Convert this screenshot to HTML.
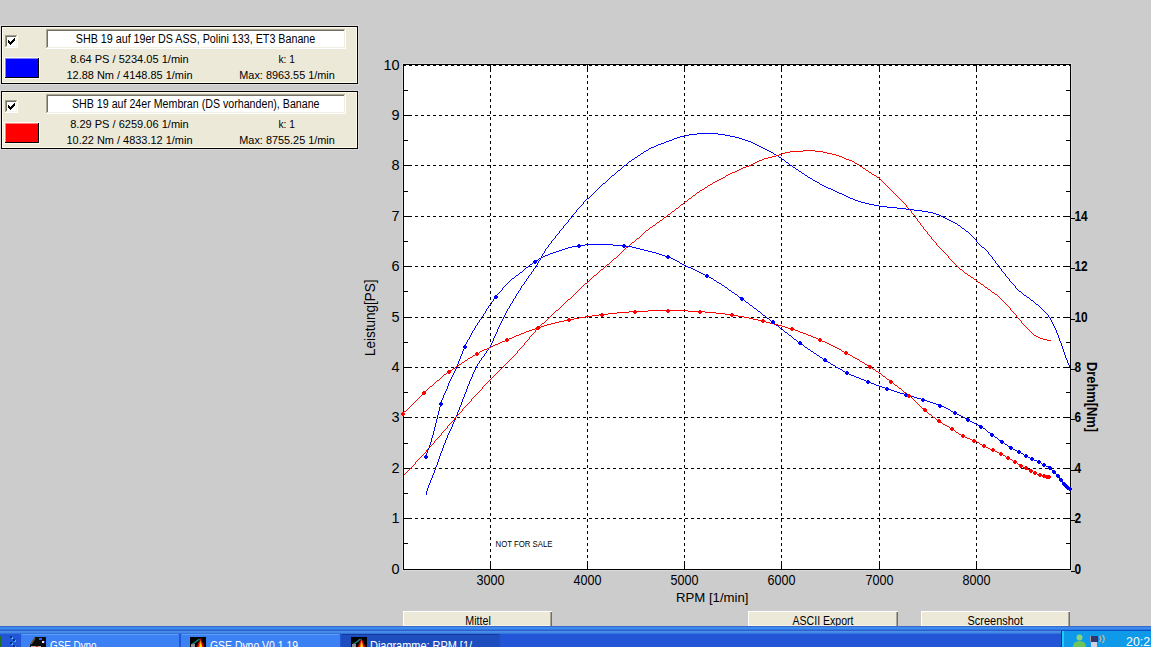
<!DOCTYPE html>
<html><head><meta charset="utf-8"><title>Diagramme</title><style>
html,body{margin:0;padding:0;width:1151px;height:647px;overflow:hidden;background:#cccccc}
svg{position:absolute;left:0;top:0;display:block}
text{font-family:"Liberation Sans",sans-serif;fill:#000}
g[fill="#ffffff"] text{fill:#fff}
</style></head><body>
<svg width="1151" height="647" viewBox="0 0 1151 647">
<g shape-rendering="crispEdges">
<rect x="0" y="25" width="359" height="60" fill="#dcdcdc"/><rect x="1" y="26" width="357" height="58" fill="#000"/><rect x="2" y="27" width="355" height="56" fill="#fffbea"/><rect x="3" y="28" width="353" height="54" fill="#ece9d8"/><rect x="5" y="35" width="13" height="13" fill="#ffffff"/><rect x="5" y="35" width="12" height="12" fill="#a29e90"/><rect x="6" y="36" width="11" height="11" fill="#f5f3ea"/><rect x="6" y="36" width="10" height="10" fill="#716f64"/><rect x="7" y="37" width="9" height="9" fill="#ffffff"/><rect x="14" y="38" width="1" height="1" fill="#000"/><rect x="13" y="39" width="1" height="1" fill="#000"/><rect x="14" y="39" width="1" height="1" fill="#000"/><rect x="8" y="40" width="1" height="1" fill="#000"/><rect x="12" y="40" width="1" height="1" fill="#000"/><rect x="13" y="40" width="1" height="1" fill="#000"/><rect x="14" y="40" width="1" height="1" fill="#000"/><rect x="8" y="41" width="1" height="1" fill="#000"/><rect x="9" y="41" width="1" height="1" fill="#000"/><rect x="11" y="41" width="1" height="1" fill="#000"/><rect x="12" y="41" width="1" height="1" fill="#000"/><rect x="13" y="41" width="1" height="1" fill="#000"/><rect x="8" y="42" width="1" height="1" fill="#000"/><rect x="9" y="42" width="1" height="1" fill="#000"/><rect x="10" y="42" width="1" height="1" fill="#000"/><rect x="11" y="42" width="1" height="1" fill="#000"/><rect x="12" y="42" width="1" height="1" fill="#000"/><rect x="9" y="43" width="1" height="1" fill="#000"/><rect x="10" y="43" width="1" height="1" fill="#000"/><rect x="11" y="43" width="1" height="1" fill="#000"/><rect x="10" y="44" width="1" height="1" fill="#000"/><rect x="46" y="29" width="300" height="20" fill="#ffffff"/><rect x="46" y="29" width="299" height="19" fill="#aca899"/><rect x="47" y="30" width="298" height="18" fill="#f1efe2"/><rect x="47" y="30" width="297" height="17" fill="#716f64"/><rect x="48" y="31" width="296" height="16" fill="#ffffff"/><text x="75.8" y="43" font-size="12" text-anchor="start" font-weight="normal" textLength="239.5" lengthAdjust="spacingAndGlyphs">SHB 19 auf 19er DS ASS, Polini 133, ET3 Banane</text><rect x="5" y="58" width="34" height="20" fill="#000"/><rect x="4" y="57" width="36" height="22" fill="#fffbea"/><rect x="5" y="58" width="34" height="20" fill="#000"/><rect x="5" y="58" width="33" height="19" fill="#8080ff"/><rect x="6" y="59" width="32" height="18" fill="#0000ff"/><text x="70.2" y="63" font-size="11.5" text-anchor="start" font-weight="normal" textLength="118.5" lengthAdjust="spacingAndGlyphs">8.64 PS / 5234.05 1/min</text><text x="66.5" y="79" font-size="11.5" text-anchor="start" font-weight="normal" textLength="126" lengthAdjust="spacingAndGlyphs">12.88 Nm / 4148.85 1/min</text><text x="278.5" y="63" font-size="11.5" text-anchor="start" font-weight="normal" textLength="16.5" lengthAdjust="spacingAndGlyphs">k: 1</text><text x="239.3" y="79" font-size="11.5" text-anchor="start" font-weight="normal" textLength="95.5" lengthAdjust="spacingAndGlyphs">Max: 8963.55 1/min</text>
<rect x="0" y="90" width="359" height="60" fill="#dcdcdc"/><rect x="1" y="91" width="357" height="58" fill="#000"/><rect x="2" y="92" width="355" height="56" fill="#fffbea"/><rect x="3" y="93" width="353" height="54" fill="#ece9d8"/><rect x="5" y="100" width="13" height="13" fill="#ffffff"/><rect x="5" y="100" width="12" height="12" fill="#a29e90"/><rect x="6" y="101" width="11" height="11" fill="#f5f3ea"/><rect x="6" y="101" width="10" height="10" fill="#716f64"/><rect x="7" y="102" width="9" height="9" fill="#ffffff"/><rect x="14" y="103" width="1" height="1" fill="#000"/><rect x="13" y="104" width="1" height="1" fill="#000"/><rect x="14" y="104" width="1" height="1" fill="#000"/><rect x="8" y="105" width="1" height="1" fill="#000"/><rect x="12" y="105" width="1" height="1" fill="#000"/><rect x="13" y="105" width="1" height="1" fill="#000"/><rect x="14" y="105" width="1" height="1" fill="#000"/><rect x="8" y="106" width="1" height="1" fill="#000"/><rect x="9" y="106" width="1" height="1" fill="#000"/><rect x="11" y="106" width="1" height="1" fill="#000"/><rect x="12" y="106" width="1" height="1" fill="#000"/><rect x="13" y="106" width="1" height="1" fill="#000"/><rect x="8" y="107" width="1" height="1" fill="#000"/><rect x="9" y="107" width="1" height="1" fill="#000"/><rect x="10" y="107" width="1" height="1" fill="#000"/><rect x="11" y="107" width="1" height="1" fill="#000"/><rect x="12" y="107" width="1" height="1" fill="#000"/><rect x="9" y="108" width="1" height="1" fill="#000"/><rect x="10" y="108" width="1" height="1" fill="#000"/><rect x="11" y="108" width="1" height="1" fill="#000"/><rect x="10" y="109" width="1" height="1" fill="#000"/><rect x="46" y="94" width="300" height="20" fill="#ffffff"/><rect x="46" y="94" width="299" height="19" fill="#aca899"/><rect x="47" y="95" width="298" height="18" fill="#f1efe2"/><rect x="47" y="95" width="297" height="17" fill="#716f64"/><rect x="48" y="96" width="296" height="16" fill="#ffffff"/><text x="72" y="108" font-size="12" text-anchor="start" font-weight="normal" textLength="247.5" lengthAdjust="spacingAndGlyphs">SHB 19 auf 24er Membran (DS vorhanden), Banane</text><rect x="5" y="123" width="34" height="20" fill="#000"/><rect x="4" y="122" width="36" height="22" fill="#fffbea"/><rect x="5" y="123" width="34" height="20" fill="#000"/><rect x="5" y="123" width="33" height="19" fill="#ff8080"/><rect x="6" y="124" width="32" height="18" fill="#ff0000"/><text x="70.2" y="128" font-size="11.5" text-anchor="start" font-weight="normal" textLength="118.5" lengthAdjust="spacingAndGlyphs">8.29 PS / 6259.06 1/min</text><text x="66.5" y="144" font-size="11.5" text-anchor="start" font-weight="normal" textLength="126" lengthAdjust="spacingAndGlyphs">10.22 Nm / 4833.12 1/min</text><text x="278.5" y="128" font-size="11.5" text-anchor="start" font-weight="normal" textLength="16.5" lengthAdjust="spacingAndGlyphs">k: 1</text><text x="239.3" y="144" font-size="11.5" text-anchor="start" font-weight="normal" textLength="95.5" lengthAdjust="spacingAndGlyphs">Max: 8755.25 1/min</text>
</g>
<g shape-rendering="crispEdges"><rect x="402" y="63" width="670" height="508" fill="#dadada"/><rect x="403" y="64" width="668" height="506" fill="#ffffff"/><g stroke="#000" stroke-width="1" stroke-dasharray="3 3"><line x1="403" y1="518.5" x2="1070" y2="518.5"/><line x1="403" y1="468.5" x2="1070" y2="468.5"/><line x1="403" y1="417.5" x2="1070" y2="417.5"/><line x1="403" y1="367.5" x2="1070" y2="367.5"/><line x1="403" y1="317.5" x2="1070" y2="317.5"/><line x1="403" y1="266.5" x2="1070" y2="266.5"/><line x1="403" y1="216.5" x2="1070" y2="216.5"/><line x1="403" y1="165.5" x2="1070" y2="165.5"/><line x1="403" y1="115.5" x2="1070" y2="115.5"/><line x1="403" y1="65.5" x2="1070" y2="65.5"/></g><g stroke="#000" stroke-width="1" stroke-dasharray="3 3" stroke-dashoffset="2"><line x1="490.5" y1="65" x2="490.5" y2="569"/><line x1="587.5" y1="65" x2="587.5" y2="569"/><line x1="684.5" y1="65" x2="684.5" y2="569"/><line x1="781.5" y1="65" x2="781.5" y2="569"/><line x1="879.5" y1="65" x2="879.5" y2="569"/><line x1="976.5" y1="65" x2="976.5" y2="569"/></g><g fill="#000" shape-rendering="crispEdges"><rect x="403" y="518" width="9" height="1"/><rect x="1063" y="518" width="8" height="1"/><rect x="403" y="468" width="9" height="1"/><rect x="1063" y="468" width="8" height="1"/><rect x="403" y="417" width="9" height="1"/><rect x="1063" y="417" width="8" height="1"/><rect x="403" y="367" width="9" height="1"/><rect x="1063" y="367" width="8" height="1"/><rect x="403" y="317" width="9" height="1"/><rect x="1063" y="317" width="8" height="1"/><rect x="403" y="266" width="9" height="1"/><rect x="1063" y="266" width="8" height="1"/><rect x="403" y="216" width="9" height="1"/><rect x="1063" y="216" width="8" height="1"/><rect x="403" y="165" width="9" height="1"/><rect x="1063" y="165" width="8" height="1"/><rect x="403" y="115" width="9" height="1"/><rect x="1063" y="115" width="8" height="1"/><rect x="403" y="543" width="5" height="1"/><rect x="1066" y="543" width="5" height="1"/><rect x="403" y="493" width="5" height="1"/><rect x="1066" y="493" width="5" height="1"/><rect x="403" y="443" width="5" height="1"/><rect x="1066" y="443" width="5" height="1"/><rect x="403" y="392" width="5" height="1"/><rect x="1066" y="392" width="5" height="1"/><rect x="403" y="342" width="5" height="1"/><rect x="1066" y="342" width="5" height="1"/><rect x="403" y="291" width="5" height="1"/><rect x="1066" y="291" width="5" height="1"/><rect x="403" y="241" width="5" height="1"/><rect x="1066" y="241" width="5" height="1"/><rect x="403" y="191" width="5" height="1"/><rect x="1066" y="191" width="5" height="1"/><rect x="403" y="140" width="5" height="1"/><rect x="1066" y="140" width="5" height="1"/><rect x="403" y="90" width="5" height="1"/><rect x="1066" y="90" width="5" height="1"/><rect x="490" y="64" width="1" height="8"/><rect x="490" y="561" width="1" height="9"/><rect x="587" y="64" width="1" height="8"/><rect x="587" y="561" width="1" height="9"/><rect x="684" y="64" width="1" height="8"/><rect x="684" y="561" width="1" height="9"/><rect x="781" y="64" width="1" height="8"/><rect x="781" y="561" width="1" height="9"/><rect x="879" y="64" width="1" height="8"/><rect x="879" y="561" width="1" height="9"/><rect x="976" y="64" width="1" height="8"/><rect x="976" y="561" width="1" height="9"/><rect x="403" y="64" width="668" height="1"/><rect x="403" y="569" width="668" height="1"/><rect x="403" y="64" width="1" height="506"/><rect x="1070" y="64" width="1" height="506"/><rect x="1071" y="571" width="4" height="1"/><rect x="1071" y="520" width="4" height="1"/><rect x="1071" y="470" width="4" height="1"/><rect x="1071" y="419" width="4" height="1"/><rect x="1071" y="369" width="4" height="1"/><rect x="1071" y="319" width="4" height="1"/><rect x="1071" y="268" width="4" height="1"/><rect x="1071" y="218" width="4" height="1"/></g></g>
<path d="M697 133h21v1h-21zM689 134h8v1h-8zM718 134h7v1h-7zM685 135h4v1h-4zM725 135h5v1h-5zM680 136h5v1h-5zM730 136h5v1h-5zM677 137h3v1h-3zM735 137h4v1h-4zM674 138h3v1h-3zM739 138h3v1h-3zM672 139h2v1h-2zM742 139h3v1h-3zM669 140h3v1h-3zM745 140h3v1h-3zM666 141h3v1h-3zM748 141h3v1h-3zM664 142h2v1h-2zM751 142h2v1h-2zM661 143h3v1h-3zM753 143h2v1h-2zM658 144h3v1h-3zM755 144h2v1h-2zM656 145h2v1h-2zM757 145h2v1h-2zM654 146h2v1h-2zM759 146h2v1h-2zM651 147h3v1h-3zM761 147h2v1h-2zM649 148h2v1h-2zM763 148h2v1h-2zM648 149h1v1h-1zM765 149h2v1h-2zM646 150h2v1h-2zM767 150h2v1h-2zM644 151h2v1h-2zM769 151h2v1h-2zM643 152h1v1h-1zM771 152h2v1h-2zM641 153h2v1h-2zM773 153h1v1h-1zM640 154h1v1h-1zM774 154h2v1h-2zM638 155h2v1h-2zM776 155h2v1h-2zM637 156h1v1h-1zM778 156h1v1h-1zM635 157h2v1h-2zM779 157h2v1h-2zM634 158h1v1h-1zM781 158h1v1h-1zM632 159h2v1h-2zM782 159h2v1h-2zM631 160h1v1h-1zM784 160h1v1h-1zM629 161h2v1h-2zM785 161h1v1h-1zM628 162h1v1h-1zM786 162h2v1h-2zM627 163h1v1h-1zM788 163h1v1h-1zM626 164h1v1h-1zM789 164h1v1h-1zM624 165h2v1h-2zM790 165h2v1h-2zM623 166h1v1h-1zM792 166h1v1h-1zM622 167h1v1h-1zM793 167h2v1h-2zM621 168h1v1h-1zM795 168h1v1h-1zM620 169h1v1h-1zM796 169h2v1h-2zM618 170h2v1h-2zM798 170h1v1h-1zM617 171h1v1h-1zM799 171h2v1h-2zM616 172h1v1h-1zM801 172h1v1h-1zM615 173h1v1h-1zM802 173h2v1h-2zM614 174h1v1h-1zM804 174h1v1h-1zM612 175h2v1h-2zM805 175h2v1h-2zM611 176h1v1h-1zM807 176h1v1h-1zM610 177h1v1h-1zM808 177h2v1h-2zM609 178h1v1h-1zM810 178h2v1h-2zM608 179h1v1h-1zM812 179h1v1h-1zM607 180h1v1h-1zM813 180h2v1h-2zM606 181h1v1h-1zM815 181h2v1h-2zM605 182h1v1h-1zM817 182h2v1h-2zM603 183h2v1h-2zM819 183h1v1h-1zM602 184h1v1h-1zM820 184h2v1h-2zM601 185h1v1h-1zM822 185h2v1h-2zM600 186h1v1h-1zM824 186h2v1h-2zM599 187h1v1h-1zM826 187h2v1h-2zM598 188h1v1h-1zM828 188h3v1h-3zM597 189h1v1h-1zM831 189h2v1h-2zM596 190h1v1h-1zM833 190h2v1h-2zM595 191h1v1h-1zM835 191h2v1h-2zM594 192h1v1h-1zM837 192h2v1h-2zM593 193h1v1h-1zM839 193h3v1h-3zM592 194h1v1h-1zM842 194h2v1h-2zM591 195h1v1h-1zM844 195h2v1h-2zM590 196h1v1h-1zM846 196h2v1h-2zM589 197h1v1h-1zM848 197h2v1h-2zM587 198h2v1h-2zM850 198h3v1h-3zM586 199h1v1h-1zM853 199h2v1h-2zM585 200h1v1h-1zM855 200h3v1h-3zM584 201h1v1h-1zM858 201h3v1h-3zM583 202h1v1h-1zM861 202h4v1h-4zM583 203h1v1h-1zM865 203h4v1h-4zM582 204h1v1h-1zM869 204h5v1h-5zM581 205h1v1h-1zM874 205h5v1h-5zM580 206h1v1h-1zM879 206h8v1h-8zM579 207h1v1h-1zM887 207h10v1h-10zM578 208h1v1h-1zM897 208h9v1h-9zM577 209h1v1h-1zM906 209h8v1h-8zM576 210h1v1h-1zM914 210h8v1h-8zM576 211h1v1h-1zM922 211h6v1h-6zM575 212h1v1h-1zM928 212h5v1h-5zM574 213h1v1h-1zM933 213h3v1h-3zM573 214h1v1h-1zM936 214h3v1h-3zM572 215h1v1h-1zM939 215h2v1h-2zM572 216h1v1h-1zM941 216h2v1h-2zM571 217h1v1h-1zM943 217h2v1h-2zM570 218h1v1h-1zM945 218h2v1h-2zM569 219h1v1h-1zM947 219h2v1h-2zM568 220h1v1h-1zM949 220h2v1h-2zM568 221h1v1h-1zM951 221h2v1h-2zM567 222h1v1h-1zM953 222h2v1h-2zM566 223h1v1h-1zM955 223h2v1h-2zM565 224h1v1h-1zM957 224h1v1h-1zM564 225h1v1h-1zM958 225h2v1h-2zM563 226h1v1h-1zM960 226h1v1h-1zM563 227h1v1h-1zM961 227h1v1h-1zM562 228h1v1h-1zM962 228h2v1h-2zM561 229h1v1h-1zM964 229h1v1h-1zM560 230h1v1h-1zM965 230h1v1h-1zM559 231h1v1h-1zM966 231h2v1h-2zM559 232h1v1h-1zM968 232h1v1h-1zM558 233h1v1h-1zM969 233h1v1h-1zM557 234h1v1h-1zM970 234h1v1h-1zM556 235h1v1h-1zM971 235h1v1h-1zM555 236h1v1h-1zM972 236h1v1h-1zM555 237h1v1h-1zM973 237h1v1h-1zM554 238h1v1h-1zM974 238h1v1h-1zM553 239h1v1h-1zM975 239h1v1h-1zM552 240h1v1h-1zM976 240h1v1h-1zM551 241h1v1h-1zM976 241h1v1h-1zM551 242h1v1h-1zM977 242h1v1h-1zM550 243h1v1h-1zM978 243h1v1h-1zM549 244h1v1h-1zM979 244h1v1h-1zM548 245h1v1h-1zM980 245h1v1h-1zM548 246h1v1h-1zM981 246h1v1h-1zM547 247h1v1h-1zM982 247h2v1h-2zM546 248h1v1h-1zM984 248h1v1h-1zM545 249h1v1h-1zM985 249h1v1h-1zM545 250h1v1h-1zM986 250h1v1h-1zM544 251h1v1h-1zM987 251h1v1h-1zM544 252h1v1h-1zM988 252h1v1h-1zM543 253h1v1h-1zM988 253h1v1h-1zM542 254h1v1h-1zM989 254h1v1h-1zM542 255h1v1h-1zM990 255h1v1h-1zM541 256h1v1h-1zM991 256h1v1h-1zM541 257h1v1h-1zM992 257h1v1h-1zM540 258h1v1h-1zM992 258h1v1h-1zM540 259h1v1h-1zM993 259h1v1h-1zM539 260h1v1h-1zM994 260h1v1h-1zM538 261h1v1h-1zM995 261h1v1h-1zM538 262h1v1h-1zM995 262h1v1h-1zM537 263h1v1h-1zM996 263h1v1h-1zM537 264h1v1h-1zM997 264h1v1h-1zM536 265h1v1h-1zM998 265h1v1h-1zM536 266h1v1h-1zM999 266h1v1h-1zM535 267h1v1h-1zM999 267h1v1h-1zM534 268h1v1h-1zM1000 268h1v1h-1zM533 269h1v1h-1zM1001 269h1v1h-1zM533 270h1v1h-1zM1001 270h1v1h-1zM532 271h1v1h-1zM1002 271h1v1h-1zM531 272h1v1h-1zM1003 272h1v1h-1zM531 273h1v1h-1zM1004 273h1v1h-1zM530 274h1v1h-1zM1005 274h1v1h-1zM529 275h1v1h-1zM1005 275h1v1h-1zM528 276h1v1h-1zM1006 276h1v1h-1zM528 277h1v1h-1zM1007 277h1v1h-1zM527 278h1v1h-1zM1008 278h1v1h-1zM526 279h1v1h-1zM1009 279h1v1h-1zM526 280h1v1h-1zM1009 280h1v1h-1zM525 281h1v1h-1zM1010 281h1v1h-1zM524 282h1v1h-1zM1011 282h1v1h-1zM524 283h1v1h-1zM1012 283h1v1h-1zM523 284h1v1h-1zM1013 284h1v1h-1zM522 285h1v1h-1zM1014 285h1v1h-1zM521 286h1v1h-1zM1015 286h1v1h-1zM521 287h1v1h-1zM1015 287h1v1h-1zM520 288h1v1h-1zM1016 288h1v1h-1zM520 289h1v1h-1zM1017 289h1v1h-1zM519 290h1v1h-1zM1018 290h1v1h-1zM518 291h1v1h-1zM1019 291h2v1h-2zM518 292h1v1h-1zM1021 292h1v1h-1zM517 293h1v1h-1zM1022 293h1v1h-1zM516 294h1v1h-1zM1023 294h1v1h-1zM516 295h1v1h-1zM1024 295h2v1h-2zM515 296h1v1h-1zM1026 296h1v1h-1zM515 297h1v1h-1zM1027 297h2v1h-2zM514 298h1v1h-1zM1029 298h1v1h-1zM513 299h1v1h-1zM1030 299h1v1h-1zM513 300h1v1h-1zM1031 300h2v1h-2zM512 301h1v1h-1zM1033 301h1v1h-1zM512 302h1v1h-1zM1034 302h1v1h-1zM511 303h1v1h-1zM1035 303h1v1h-1zM510 304h1v1h-1zM1036 304h2v1h-2zM510 305h1v1h-1zM1038 305h1v1h-1zM509 306h1v1h-1zM1039 306h1v1h-1zM509 307h1v1h-1zM1040 307h1v1h-1zM508 308h1v1h-1zM1041 308h1v1h-1zM507 309h1v1h-1zM1042 309h1v1h-1zM507 310h1v1h-1zM1043 310h1v1h-1zM506 311h1v1h-1zM1044 311h1v1h-1zM506 312h1v1h-1zM1045 312h1v1h-1zM505 313h1v1h-1zM1046 313h1v1h-1zM505 314h1v1h-1zM1047 314h1v1h-1zM504 315h1v1h-1zM1048 315h1v1h-1zM504 316h1v1h-1zM1048 316h1v1h-1zM503 317h1v1h-1zM1049 317h1v1h-1zM503 318h1v1h-1zM1050 318h1v1h-1zM502 319h1v1h-1zM1050 319h1v1h-1zM502 320h1v1h-1zM1051 320h1v1h-1zM501 321h1v1h-1zM1051 321h1v1h-1zM501 322h1v1h-1zM1052 322h1v1h-1zM500 323h1v1h-1zM1052 323h1v1h-1zM500 324h1v1h-1zM1053 324h1v1h-1zM499 325h1v1h-1zM1053 325h1v1h-1zM499 326h1v1h-1zM1054 326h1v1h-1zM498 327h1v1h-1zM1054 327h1v1h-1zM498 328h1v1h-1zM1055 328h1v1h-1zM497 329h1v1h-1zM1055 329h1v1h-1zM497 330h1v1h-1zM1056 330h1v1h-1zM497 331h1v1h-1zM1056 331h1v1h-1zM496 332h1v1h-1zM1056 332h1v1h-1zM496 333h1v1h-1zM1057 333h1v1h-1zM495 334h1v1h-1zM1057 334h1v1h-1zM495 335h1v1h-1zM1058 335h1v1h-1zM494 336h1v1h-1zM1058 336h1v1h-1zM494 337h1v1h-1zM1058 337h1v1h-1zM493 338h1v1h-1zM1059 338h1v1h-1zM493 339h1v1h-1zM1059 339h1v1h-1zM493 340h1v1h-1zM1059 340h1v1h-1zM492 341h1v1h-1zM1060 341h1v1h-1zM492 342h1v1h-1zM1060 342h1v1h-1zM491 343h1v1h-1zM1061 343h1v1h-1zM491 344h1v1h-1zM1061 344h1v1h-1zM490 345h1v1h-1zM1061 345h1v1h-1zM490 346h1v1h-1zM1062 346h1v1h-1zM489 347h1v1h-1zM1062 347h1v1h-1zM488 348h1v1h-1zM1062 348h1v1h-1zM488 349h1v1h-1zM1063 349h1v1h-1zM487 350h1v1h-1zM1063 350h1v1h-1zM486 351h1v1h-1zM1063 351h1v1h-1zM486 352h1v1h-1zM1064 352h1v1h-1zM485 353h1v1h-1zM1064 353h1v1h-1zM484 354h1v1h-1zM1064 354h1v1h-1zM484 355h1v1h-1zM1065 355h1v1h-1zM483 356h1v1h-1zM1065 356h1v1h-1zM482 357h1v1h-1zM1065 357h1v1h-1zM481 358h1v1h-1zM1066 358h1v1h-1zM481 359h1v1h-1zM1066 359h1v1h-1zM480 360h1v1h-1zM1067 360h1v1h-1zM479 361h1v1h-1zM1067 361h1v1h-1zM479 362h1v1h-1zM1067 362h1v1h-1zM478 363h1v1h-1zM1068 363h1v1h-1zM477 364h1v1h-1zM1068 364h1v1h-1zM477 365h1v1h-1zM1069 365h1v1h-1zM476 366h1v1h-1zM1069 366h1v1h-1zM476 367h1v1h-1zM475 368h1v1h-1zM475 369h1v1h-1zM474 370h1v1h-1zM474 371h1v1h-1zM473 372h1v1h-1zM473 373h1v1h-1zM472 374h1v1h-1zM472 375h1v1h-1zM472 376h1v1h-1zM471 377h1v1h-1zM471 378h1v1h-1zM470 379h1v1h-1zM470 380h1v1h-1zM469 381h1v1h-1zM469 382h1v1h-1zM469 383h1v1h-1zM468 384h1v1h-1zM468 385h1v1h-1zM467 386h1v1h-1zM467 387h1v1h-1zM467 388h1v1h-1zM466 389h1v1h-1zM466 390h1v1h-1zM466 391h1v1h-1zM465 392h1v1h-1zM465 393h1v1h-1zM464 394h1v1h-1zM464 395h1v1h-1zM464 396h1v1h-1zM463 397h1v1h-1zM463 398h1v1h-1zM462 399h1v1h-1zM462 400h1v1h-1zM462 401h1v1h-1zM461 402h1v1h-1zM461 403h1v1h-1zM461 404h1v1h-1zM460 405h1v1h-1zM460 406h1v1h-1zM459 407h1v1h-1zM459 408h1v1h-1zM459 409h1v1h-1zM458 410h1v1h-1zM458 411h1v1h-1zM457 412h1v1h-1zM457 413h1v1h-1zM457 414h1v1h-1zM456 415h1v1h-1zM456 416h1v1h-1zM455 417h1v1h-1zM455 418h1v1h-1zM455 419h1v1h-1zM454 420h1v1h-1zM454 421h1v1h-1zM453 422h1v1h-1zM453 423h1v1h-1zM452 424h1v1h-1zM452 425h1v1h-1zM452 426h1v1h-1zM451 427h1v1h-1zM451 428h1v1h-1zM450 429h1v1h-1zM450 430h1v1h-1zM449 431h1v1h-1zM449 432h1v1h-1zM448 433h1v1h-1zM448 434h1v1h-1zM447 435h1v1h-1zM447 436h1v1h-1zM447 437h1v1h-1zM446 438h1v1h-1zM446 439h1v1h-1zM445 440h1v1h-1zM445 441h1v1h-1zM445 442h1v1h-1zM444 443h1v1h-1zM444 444h1v1h-1zM443 445h1v1h-1zM443 446h1v1h-1zM443 447h1v1h-1zM442 448h1v1h-1zM442 449h1v1h-1zM442 450h1v1h-1zM441 451h1v1h-1zM441 452h1v1h-1zM440 453h1v1h-1zM440 454h1v1h-1zM440 455h1v1h-1zM439 456h1v1h-1zM439 457h1v1h-1zM439 458h1v1h-1zM438 459h1v1h-1zM438 460h1v1h-1zM438 461h1v1h-1zM437 462h1v1h-1zM437 463h1v1h-1zM437 464h1v1h-1zM436 465h1v1h-1zM436 466h1v1h-1zM435 467h1v1h-1zM435 468h1v1h-1zM435 469h1v1h-1zM434 470h1v1h-1zM434 471h1v1h-1zM434 472h1v1h-1zM433 473h1v1h-1zM433 474h1v1h-1zM432 475h1v1h-1zM432 476h1v1h-1zM432 477h1v1h-1zM431 478h1v1h-1zM431 479h1v1h-1zM430 480h1v1h-1zM430 481h1v1h-1zM430 482h1v1h-1zM429 483h1v1h-1zM429 484h1v1h-1zM428 485h1v1h-1zM428 486h1v1h-1zM428 487h1v1h-1zM427 488h1v1h-1zM427 489h1v1h-1zM427 490h1v1h-1zM426 491h1v1h-1zM426 492h1v1h-1zM426 493h1v1h-1zM426 494h1v1h-1z" fill="#0000ff" shape-rendering="crispEdges"/>
<path d="M803 150h12v1h-12zM790 151h13v1h-13zM815 151h8v1h-8zM785 152h5v1h-5zM823 152h4v1h-4zM782 153h3v1h-3zM827 153h5v1h-5zM779 154h3v1h-3zM832 154h4v1h-4zM776 155h3v1h-3zM836 155h3v1h-3zM772 156h4v1h-4zM839 156h3v1h-3zM768 157h4v1h-4zM842 157h2v1h-2zM764 158h4v1h-4zM844 158h2v1h-2zM762 159h2v1h-2zM846 159h3v1h-3zM759 160h3v1h-3zM849 160h3v1h-3zM757 161h2v1h-2zM852 161h2v1h-2zM755 162h2v1h-2zM854 162h1v1h-1zM753 163h2v1h-2zM855 163h2v1h-2zM751 164h2v1h-2zM857 164h2v1h-2zM749 165h2v1h-2zM859 165h1v1h-1zM746 166h3v1h-3zM860 166h2v1h-2zM743 167h3v1h-3zM862 167h1v1h-1zM741 168h2v1h-2zM863 168h2v1h-2zM739 169h2v1h-2zM865 169h1v1h-1zM737 170h2v1h-2zM866 170h2v1h-2zM735 171h2v1h-2zM868 171h1v1h-1zM732 172h3v1h-3zM869 172h2v1h-2zM730 173h2v1h-2zM871 173h1v1h-1zM728 174h2v1h-2zM872 174h2v1h-2zM726 175h2v1h-2zM874 175h2v1h-2zM725 176h1v1h-1zM876 176h1v1h-1zM723 177h2v1h-2zM877 177h2v1h-2zM721 178h2v1h-2zM879 178h1v1h-1zM719 179h2v1h-2zM880 179h1v1h-1zM717 180h2v1h-2zM881 180h1v1h-1zM715 181h2v1h-2zM882 181h1v1h-1zM713 182h2v1h-2zM883 182h1v1h-1zM712 183h1v1h-1zM884 183h1v1h-1zM710 184h2v1h-2zM885 184h1v1h-1zM708 185h2v1h-2zM886 185h1v1h-1zM707 186h1v1h-1zM887 186h1v1h-1zM705 187h2v1h-2zM888 187h1v1h-1zM704 188h1v1h-1zM889 188h1v1h-1zM702 189h2v1h-2zM890 189h1v1h-1zM700 190h2v1h-2zM891 190h1v1h-1zM699 191h1v1h-1zM892 191h1v1h-1zM697 192h2v1h-2zM893 192h1v1h-1zM696 193h1v1h-1zM894 193h1v1h-1zM695 194h1v1h-1zM895 194h1v1h-1zM693 195h2v1h-2zM896 195h1v1h-1zM692 196h1v1h-1zM897 196h1v1h-1zM691 197h1v1h-1zM898 197h1v1h-1zM689 198h2v1h-2zM899 198h1v1h-1zM688 199h1v1h-1zM900 199h1v1h-1zM687 200h1v1h-1zM901 200h1v1h-1zM685 201h2v1h-2zM902 201h1v1h-1zM684 202h1v1h-1zM903 202h1v1h-1zM683 203h1v1h-1zM904 203h1v1h-1zM681 204h2v1h-2zM905 204h1v1h-1zM680 205h1v1h-1zM906 205h1v1h-1zM679 206h1v1h-1zM906 206h1v1h-1zM678 207h1v1h-1zM907 207h1v1h-1zM676 208h2v1h-2zM908 208h1v1h-1zM675 209h1v1h-1zM909 209h1v1h-1zM674 210h1v1h-1zM910 210h1v1h-1zM672 211h2v1h-2zM911 211h1v1h-1zM671 212h1v1h-1zM911 212h1v1h-1zM670 213h1v1h-1zM912 213h1v1h-1zM668 214h2v1h-2zM913 214h1v1h-1zM667 215h1v1h-1zM914 215h1v1h-1zM666 216h1v1h-1zM915 216h1v1h-1zM664 217h2v1h-2zM915 217h1v1h-1zM663 218h1v1h-1zM916 218h1v1h-1zM662 219h1v1h-1zM917 219h1v1h-1zM660 220h2v1h-2zM917 220h1v1h-1zM659 221h1v1h-1zM918 221h1v1h-1zM657 222h2v1h-2zM919 222h1v1h-1zM656 223h1v1h-1zM920 223h1v1h-1zM655 224h1v1h-1zM920 224h1v1h-1zM653 225h2v1h-2zM921 225h1v1h-1zM652 226h1v1h-1zM922 226h1v1h-1zM650 227h2v1h-2zM923 227h1v1h-1zM649 228h1v1h-1zM923 228h1v1h-1zM648 229h1v1h-1zM924 229h1v1h-1zM646 230h2v1h-2zM925 230h1v1h-1zM645 231h1v1h-1zM926 231h1v1h-1zM644 232h1v1h-1zM927 232h1v1h-1zM643 233h1v1h-1zM927 233h1v1h-1zM642 234h1v1h-1zM928 234h1v1h-1zM641 235h1v1h-1zM929 235h1v1h-1zM640 236h1v1h-1zM930 236h1v1h-1zM639 237h1v1h-1zM931 237h1v1h-1zM637 238h2v1h-2zM931 238h1v1h-1zM636 239h1v1h-1zM932 239h1v1h-1zM635 240h1v1h-1zM933 240h1v1h-1zM634 241h1v1h-1zM934 241h1v1h-1zM632 242h2v1h-2zM935 242h1v1h-1zM631 243h1v1h-1zM936 243h1v1h-1zM630 244h1v1h-1zM936 244h1v1h-1zM629 245h1v1h-1zM937 245h1v1h-1zM628 246h1v1h-1zM938 246h1v1h-1zM626 247h2v1h-2zM939 247h1v1h-1zM625 248h1v1h-1zM940 248h1v1h-1zM624 249h1v1h-1zM941 249h1v1h-1zM623 250h1v1h-1zM942 250h1v1h-1zM622 251h1v1h-1zM943 251h1v1h-1zM621 252h1v1h-1zM944 252h1v1h-1zM620 253h1v1h-1zM945 253h1v1h-1zM619 254h1v1h-1zM946 254h1v1h-1zM618 255h1v1h-1zM947 255h1v1h-1zM617 256h1v1h-1zM948 256h1v1h-1zM616 257h1v1h-1zM948 257h1v1h-1zM614 258h2v1h-2zM949 258h1v1h-1zM613 259h1v1h-1zM950 259h1v1h-1zM612 260h1v1h-1zM951 260h1v1h-1zM611 261h1v1h-1zM952 261h1v1h-1zM610 262h1v1h-1zM953 262h1v1h-1zM609 263h1v1h-1zM954 263h1v1h-1zM607 264h2v1h-2zM955 264h1v1h-1zM606 265h1v1h-1zM956 265h1v1h-1zM605 266h1v1h-1zM957 266h1v1h-1zM604 267h1v1h-1zM958 267h1v1h-1zM603 268h1v1h-1zM959 268h1v1h-1zM601 269h2v1h-2zM960 269h2v1h-2zM600 270h1v1h-1zM962 270h1v1h-1zM599 271h1v1h-1zM963 271h1v1h-1zM598 272h1v1h-1zM964 272h1v1h-1zM597 273h1v1h-1zM965 273h2v1h-2zM596 274h1v1h-1zM967 274h1v1h-1zM594 275h2v1h-2zM968 275h2v1h-2zM593 276h1v1h-1zM970 276h1v1h-1zM592 277h1v1h-1zM971 277h2v1h-2zM591 278h1v1h-1zM973 278h1v1h-1zM590 279h1v1h-1zM974 279h2v1h-2zM589 280h1v1h-1zM976 280h1v1h-1zM588 281h1v1h-1zM977 281h1v1h-1zM587 282h1v1h-1zM978 282h2v1h-2zM585 283h2v1h-2zM980 283h1v1h-1zM584 284h1v1h-1zM981 284h2v1h-2zM583 285h1v1h-1zM983 285h1v1h-1zM582 286h1v1h-1zM984 286h1v1h-1zM581 287h1v1h-1zM985 287h2v1h-2zM580 288h1v1h-1zM987 288h1v1h-1zM579 289h1v1h-1zM988 289h2v1h-2zM578 290h1v1h-1zM990 290h1v1h-1zM577 291h1v1h-1zM991 291h1v1h-1zM576 292h1v1h-1zM992 292h2v1h-2zM575 293h1v1h-1zM994 293h1v1h-1zM574 294h1v1h-1zM995 294h2v1h-2zM573 295h1v1h-1zM997 295h1v1h-1zM572 296h1v1h-1zM998 296h1v1h-1zM571 297h1v1h-1zM999 297h1v1h-1zM570 298h1v1h-1zM1000 298h1v1h-1zM568 299h2v1h-2zM1001 299h1v1h-1zM567 300h1v1h-1zM1002 300h1v1h-1zM566 301h1v1h-1zM1003 301h1v1h-1zM565 302h1v1h-1zM1004 302h1v1h-1zM564 303h1v1h-1zM1005 303h1v1h-1zM563 304h1v1h-1zM1006 304h1v1h-1zM562 305h1v1h-1zM1007 305h1v1h-1zM561 306h1v1h-1zM1008 306h1v1h-1zM560 307h1v1h-1zM1009 307h1v1h-1zM559 308h1v1h-1zM1010 308h1v1h-1zM558 309h1v1h-1zM1010 309h1v1h-1zM556 310h2v1h-2zM1011 310h1v1h-1zM555 311h1v1h-1zM1012 311h1v1h-1zM554 312h1v1h-1zM1013 312h1v1h-1zM553 313h1v1h-1zM1014 313h1v1h-1zM552 314h1v1h-1zM1015 314h1v1h-1zM551 315h1v1h-1zM1016 315h1v1h-1zM550 316h1v1h-1zM1016 316h1v1h-1zM549 317h1v1h-1zM1017 317h1v1h-1zM548 318h1v1h-1zM1018 318h1v1h-1zM547 319h1v1h-1zM1019 319h1v1h-1zM546 320h1v1h-1zM1020 320h1v1h-1zM545 321h1v1h-1zM1021 321h1v1h-1zM544 322h1v1h-1zM1021 322h1v1h-1zM542 323h2v1h-2zM1022 323h1v1h-1zM541 324h1v1h-1zM1023 324h1v1h-1zM540 325h1v1h-1zM1024 325h1v1h-1zM539 326h1v1h-1zM1025 326h1v1h-1zM538 327h1v1h-1zM1026 327h1v1h-1zM537 328h1v1h-1zM1027 328h1v1h-1zM536 329h1v1h-1zM1028 329h1v1h-1zM535 330h1v1h-1zM1029 330h1v1h-1zM535 331h1v1h-1zM1030 331h1v1h-1zM534 332h1v1h-1zM1031 332h1v1h-1zM533 333h1v1h-1zM1032 333h1v1h-1zM532 334h1v1h-1zM1033 334h1v1h-1zM531 335h1v1h-1zM1034 335h2v1h-2zM530 336h1v1h-1zM1036 336h2v1h-2zM529 337h1v1h-1zM1038 337h2v1h-2zM529 338h1v1h-1zM1040 338h3v1h-3zM528 339h1v1h-1zM1043 339h4v1h-4zM527 340h1v1h-1zM1047 340h4v1h-4zM526 341h1v1h-1zM525 342h1v1h-1zM524 343h1v1h-1zM524 344h1v1h-1zM523 345h1v1h-1zM522 346h1v1h-1zM521 347h1v1h-1zM520 348h1v1h-1zM519 349h1v1h-1zM518 350h1v1h-1zM517 351h1v1h-1zM517 352h1v1h-1zM516 353h1v1h-1zM515 354h1v1h-1zM514 355h1v1h-1zM513 356h1v1h-1zM512 357h1v1h-1zM511 358h1v1h-1zM510 359h1v1h-1zM509 360h1v1h-1zM508 361h1v1h-1zM507 362h1v1h-1zM506 363h1v1h-1zM505 364h1v1h-1zM504 365h1v1h-1zM503 366h1v1h-1zM502 367h1v1h-1zM501 368h1v1h-1zM500 369h1v1h-1zM499 370h1v1h-1zM498 371h1v1h-1zM497 372h1v1h-1zM496 373h1v1h-1zM495 374h1v1h-1zM494 375h1v1h-1zM493 376h1v1h-1zM492 377h1v1h-1zM491 378h1v1h-1zM490 379h1v1h-1zM489 380h1v1h-1zM488 381h1v1h-1zM487 382h1v1h-1zM486 383h1v1h-1zM485 384h1v1h-1zM484 385h1v1h-1zM483 386h1v1h-1zM482 387h1v1h-1zM482 388h1v1h-1zM481 389h1v1h-1zM480 390h1v1h-1zM479 391h1v1h-1zM478 392h1v1h-1zM477 393h1v1h-1zM476 394h1v1h-1zM475 395h1v1h-1zM474 396h1v1h-1zM473 397h1v1h-1zM472 398h1v1h-1zM471 399h1v1h-1zM471 400h1v1h-1zM470 401h1v1h-1zM469 402h1v1h-1zM468 403h1v1h-1zM467 404h1v1h-1zM466 405h1v1h-1zM465 406h1v1h-1zM464 407h1v1h-1zM463 408h1v1h-1zM462 409h1v1h-1zM462 410h1v1h-1zM461 411h1v1h-1zM460 412h1v1h-1zM459 413h1v1h-1zM458 414h1v1h-1zM457 415h1v1h-1zM456 416h1v1h-1zM455 417h1v1h-1zM454 418h1v1h-1zM454 419h1v1h-1zM453 420h1v1h-1zM452 421h1v1h-1zM451 422h1v1h-1zM450 423h1v1h-1zM449 424h1v1h-1zM448 425h1v1h-1zM447 426h1v1h-1zM447 427h1v1h-1zM446 428h1v1h-1zM445 429h1v1h-1zM444 430h1v1h-1zM443 431h1v1h-1zM442 432h1v1h-1zM441 433h1v1h-1zM441 434h1v1h-1zM440 435h1v1h-1zM439 436h1v1h-1zM438 437h1v1h-1zM437 438h1v1h-1zM436 439h1v1h-1zM435 440h1v1h-1zM434 441h1v1h-1zM434 442h1v1h-1zM433 443h1v1h-1zM432 444h1v1h-1zM431 445h1v1h-1zM430 446h1v1h-1zM429 447h1v1h-1zM428 448h1v1h-1zM427 449h1v1h-1zM426 450h1v1h-1zM426 451h1v1h-1zM425 452h1v1h-1zM424 453h1v1h-1zM423 454h1v1h-1zM422 455h1v1h-1zM421 456h1v1h-1zM420 457h1v1h-1zM419 458h1v1h-1zM418 459h1v1h-1zM417 460h1v1h-1zM416 461h1v1h-1zM415 462h1v1h-1zM415 463h1v1h-1zM414 464h1v1h-1zM413 465h1v1h-1zM412 466h1v1h-1zM411 467h1v1h-1zM410 468h1v1h-1zM409 469h1v1h-1zM408 470h1v1h-1zM407 471h1v1h-1zM406 472h1v1h-1zM405 473h1v1h-1zM404 474h1v1h-1z" fill="#ff0000" shape-rendering="crispEdges"/>
<path d="M585 244h28v1h-28zM577 245h8v1h-8zM613 245h12v1h-12zM572 246h5v1h-5zM625 246h7v1h-7zM568 247h4v1h-4zM632 247h4v1h-4zM565 248h3v1h-3zM636 248h4v1h-4zM562 249h3v1h-3zM640 249h4v1h-4zM559 250h3v1h-3zM644 250h4v1h-4zM556 251h3v1h-3zM648 251h4v1h-4zM553 252h3v1h-3zM652 252h4v1h-4zM550 253h3v1h-3zM656 253h3v1h-3zM548 254h2v1h-2zM659 254h3v1h-3zM545 255h3v1h-3zM662 255h3v1h-3zM543 256h2v1h-2zM665 256h3v1h-3zM541 257h2v1h-2zM668 257h3v1h-3zM539 258h2v1h-2zM671 258h2v1h-2zM538 259h1v1h-1zM673 259h2v1h-2zM536 260h2v1h-2zM675 260h2v1h-2zM534 261h2v1h-2zM677 261h2v1h-2zM533 262h1v1h-1zM679 262h1v1h-1zM532 263h1v1h-1zM680 263h2v1h-2zM530 264h2v1h-2zM682 264h2v1h-2zM529 265h1v1h-1zM684 265h2v1h-2zM528 266h1v1h-1zM686 266h2v1h-2zM526 267h2v1h-2zM688 267h3v1h-3zM525 268h1v1h-1zM691 268h2v1h-2zM524 269h1v1h-1zM693 269h2v1h-2zM523 270h1v1h-1zM695 270h2v1h-2zM522 271h1v1h-1zM697 271h2v1h-2zM520 272h2v1h-2zM699 272h2v1h-2zM519 273h1v1h-1zM701 273h2v1h-2zM518 274h1v1h-1zM703 274h2v1h-2zM516 275h2v1h-2zM705 275h2v1h-2zM515 276h1v1h-1zM707 276h2v1h-2zM514 277h1v1h-1zM709 277h2v1h-2zM512 278h2v1h-2zM711 278h2v1h-2zM511 279h1v1h-1zM713 279h1v1h-1zM510 280h1v1h-1zM714 280h2v1h-2zM509 281h1v1h-1zM716 281h1v1h-1zM508 282h1v1h-1zM717 282h2v1h-2zM507 283h1v1h-1zM719 283h2v1h-2zM506 284h1v1h-1zM721 284h1v1h-1zM505 285h1v1h-1zM722 285h2v1h-2zM504 286h1v1h-1zM724 286h1v1h-1zM503 287h1v1h-1zM725 287h2v1h-2zM502 288h1v1h-1zM727 288h1v1h-1zM502 289h1v1h-1zM728 289h1v1h-1zM501 290h1v1h-1zM729 290h2v1h-2zM500 291h1v1h-1zM731 291h1v1h-1zM499 292h1v1h-1zM732 292h2v1h-2zM498 293h1v1h-1zM734 293h1v1h-1zM497 294h1v1h-1zM735 294h2v1h-2zM496 295h1v1h-1zM737 295h1v1h-1zM496 296h1v1h-1zM738 296h1v1h-1zM495 297h1v1h-1zM739 297h2v1h-2zM494 298h1v1h-1zM741 298h1v1h-1zM493 299h1v1h-1zM742 299h2v1h-2zM493 300h1v1h-1zM744 300h1v1h-1zM492 301h1v1h-1zM745 301h1v1h-1zM491 302h1v1h-1zM746 302h2v1h-2zM491 303h1v1h-1zM748 303h1v1h-1zM490 304h1v1h-1zM749 304h1v1h-1zM489 305h1v1h-1zM750 305h2v1h-2zM488 306h1v1h-1zM752 306h1v1h-1zM488 307h1v1h-1zM753 307h1v1h-1zM487 308h1v1h-1zM754 308h2v1h-2zM486 309h1v1h-1zM756 309h1v1h-1zM486 310h1v1h-1zM757 310h1v1h-1zM485 311h1v1h-1zM758 311h2v1h-2zM485 312h1v1h-1zM760 312h1v1h-1zM484 313h1v1h-1zM761 313h1v1h-1zM483 314h1v1h-1zM762 314h1v1h-1zM483 315h1v1h-1zM763 315h2v1h-2zM482 316h1v1h-1zM765 316h1v1h-1zM481 317h1v1h-1zM766 317h1v1h-1zM481 318h1v1h-1zM767 318h2v1h-2zM480 319h1v1h-1zM769 319h1v1h-1zM479 320h1v1h-1zM770 320h1v1h-1zM479 321h1v1h-1zM771 321h2v1h-2zM478 322h1v1h-1zM773 322h1v1h-1zM477 323h1v1h-1zM774 323h1v1h-1zM477 324h1v1h-1zM775 324h1v1h-1zM476 325h1v1h-1zM776 325h2v1h-2zM475 326h1v1h-1zM778 326h1v1h-1zM475 327h1v1h-1zM779 327h1v1h-1zM474 328h1v1h-1zM780 328h2v1h-2zM474 329h1v1h-1zM782 329h1v1h-1zM473 330h1v1h-1zM783 330h1v1h-1zM472 331h1v1h-1zM784 331h1v1h-1zM472 332h1v1h-1zM785 332h2v1h-2zM471 333h1v1h-1zM787 333h1v1h-1zM471 334h1v1h-1zM788 334h1v1h-1zM470 335h1v1h-1zM789 335h2v1h-2zM470 336h1v1h-1zM791 336h1v1h-1zM469 337h1v1h-1zM792 337h1v1h-1zM469 338h1v1h-1zM793 338h1v1h-1zM468 339h1v1h-1zM794 339h2v1h-2zM467 340h1v1h-1zM796 340h1v1h-1zM467 341h1v1h-1zM797 341h1v1h-1zM466 342h1v1h-1zM798 342h2v1h-2zM466 343h1v1h-1zM800 343h1v1h-1zM465 344h1v1h-1zM801 344h2v1h-2zM465 345h1v1h-1zM803 345h1v1h-1zM464 346h1v1h-1zM804 346h1v1h-1zM464 347h1v1h-1zM805 347h2v1h-2zM464 348h1v1h-1zM807 348h1v1h-1zM463 349h1v1h-1zM808 349h2v1h-2zM463 350h1v1h-1zM810 350h1v1h-1zM462 351h1v1h-1zM811 351h2v1h-2zM462 352h1v1h-1zM813 352h1v1h-1zM462 353h1v1h-1zM814 353h2v1h-2zM461 354h1v1h-1zM816 354h1v1h-1zM461 355h1v1h-1zM817 355h2v1h-2zM460 356h1v1h-1zM819 356h1v1h-1zM460 357h1v1h-1zM820 357h2v1h-2zM460 358h1v1h-1zM822 358h1v1h-1zM459 359h1v1h-1zM823 359h2v1h-2zM459 360h1v1h-1zM825 360h1v1h-1zM458 361h1v1h-1zM826 361h2v1h-2zM458 362h1v1h-1zM828 362h2v1h-2zM458 363h1v1h-1zM830 363h1v1h-1zM457 364h1v1h-1zM831 364h2v1h-2zM457 365h1v1h-1zM833 365h2v1h-2zM456 366h1v1h-1zM835 366h1v1h-1zM456 367h1v1h-1zM836 367h2v1h-2zM456 368h1v1h-1zM838 368h2v1h-2zM455 369h1v1h-1zM840 369h2v1h-2zM455 370h1v1h-1zM842 370h1v1h-1zM454 371h1v1h-1zM843 371h2v1h-2zM454 372h1v1h-1zM845 372h2v1h-2zM453 373h1v1h-1zM847 373h2v1h-2zM453 374h1v1h-1zM849 374h2v1h-2zM452 375h1v1h-1zM851 375h3v1h-3zM452 376h1v1h-1zM854 376h2v1h-2zM451 377h1v1h-1zM856 377h3v1h-3zM451 378h1v1h-1zM859 378h2v1h-2zM450 379h1v1h-1zM861 379h3v1h-3zM450 380h1v1h-1zM864 380h2v1h-2zM449 381h1v1h-1zM866 381h3v1h-3zM449 382h1v1h-1zM869 382h2v1h-2zM448 383h1v1h-1zM871 383h3v1h-3zM448 384h1v1h-1zM874 384h2v1h-2zM448 385h1v1h-1zM876 385h3v1h-3zM447 386h1v1h-1zM879 386h3v1h-3zM447 387h1v1h-1zM882 387h3v1h-3zM447 388h1v1h-1zM885 388h2v1h-2zM446 389h1v1h-1zM887 389h4v1h-4zM446 390h1v1h-1zM891 390h3v1h-3zM445 391h1v1h-1zM894 391h3v1h-3zM445 392h1v1h-1zM897 392h3v1h-3zM444 393h1v1h-1zM900 393h4v1h-4zM444 394h1v1h-1zM904 394h3v1h-3zM443 395h1v1h-1zM907 395h3v1h-3zM443 396h1v1h-1zM910 396h4v1h-4zM443 397h1v1h-1zM914 397h3v1h-3zM442 398h1v1h-1zM917 398h4v1h-4zM442 399h1v1h-1zM921 399h3v1h-3zM441 400h1v1h-1zM924 400h3v1h-3zM441 401h1v1h-1zM927 401h3v1h-3zM441 402h1v1h-1zM930 402h3v1h-3zM440 403h1v1h-1zM933 403h3v1h-3zM440 404h1v1h-1zM936 404h3v1h-3zM440 405h1v1h-1zM939 405h2v1h-2zM440 406h1v1h-1zM941 406h3v1h-3zM439 407h1v1h-1zM944 407h2v1h-2zM439 408h1v1h-1zM946 408h2v1h-2zM439 409h1v1h-1zM948 409h2v1h-2zM439 410h1v1h-1zM950 410h1v1h-1zM438 411h1v1h-1zM951 411h2v1h-2zM438 412h1v1h-1zM953 412h2v1h-2zM438 413h1v1h-1zM955 413h2v1h-2zM438 414h1v1h-1zM957 414h2v1h-2zM437 415h1v1h-1zM959 415h2v1h-2zM437 416h1v1h-1zM961 416h2v1h-2zM437 417h1v1h-1zM963 417h2v1h-2zM437 418h1v1h-1zM965 418h2v1h-2zM436 419h1v1h-1zM967 419h1v1h-1zM436 420h1v1h-1zM968 420h2v1h-2zM436 421h1v1h-1zM970 421h2v1h-2zM436 422h1v1h-1zM972 422h2v1h-2zM435 423h1v1h-1zM974 423h2v1h-2zM435 424h1v1h-1zM976 424h2v1h-2zM435 425h1v1h-1zM978 425h2v1h-2zM435 426h1v1h-1zM980 426h2v1h-2zM434 427h1v1h-1zM982 427h1v1h-1zM434 428h1v1h-1zM983 428h2v1h-2zM434 429h1v1h-1zM985 429h1v1h-1zM434 430h1v1h-1zM986 430h1v1h-1zM433 431h1v1h-1zM987 431h1v1h-1zM433 432h1v1h-1zM988 432h2v1h-2zM433 433h1v1h-1zM990 433h1v1h-1zM433 434h1v1h-1zM991 434h1v1h-1zM432 435h1v1h-1zM992 435h2v1h-2zM432 436h1v1h-1zM994 436h1v1h-1zM432 437h1v1h-1zM995 437h2v1h-2zM431 438h1v1h-1zM997 438h1v1h-1zM431 439h1v1h-1zM998 439h1v1h-1zM431 440h1v1h-1zM999 440h2v1h-2zM431 441h1v1h-1zM1001 441h1v1h-1zM430 442h1v1h-1zM1002 442h2v1h-2zM430 443h1v1h-1zM1004 443h1v1h-1zM430 444h1v1h-1zM1005 444h2v1h-2zM429 445h1v1h-1zM1007 445h1v1h-1zM429 446h1v1h-1zM1008 446h2v1h-2zM429 447h1v1h-1zM1010 447h1v1h-1zM428 448h1v1h-1zM1011 448h2v1h-2zM428 449h1v1h-1zM1013 449h2v1h-2zM427 450h1v1h-1zM1015 450h2v1h-2zM427 451h1v1h-1zM1017 451h2v1h-2zM427 452h1v1h-1zM1019 452h2v1h-2zM426 453h1v1h-1zM1021 453h2v1h-2zM426 454h1v1h-1zM1023 454h1v1h-1zM426 455h1v1h-1zM1024 455h2v1h-2zM425 456h1v1h-1zM1026 456h2v1h-2zM425 457h1v1h-1zM1028 457h2v1h-2zM1030 458h2v1h-2zM1032 459h2v1h-2zM1034 460h3v1h-3zM1037 461h2v1h-2zM1039 462h2v1h-2zM1041 463h1v1h-1zM1042 464h2v1h-2zM1044 465h2v1h-2zM1046 466h3v1h-3zM1049 467h1v1h-1zM1050 468h1v1h-1zM1051 469h1v1h-1zM1052 470h1v1h-1zM1053 471h1v1h-1zM1054 472h1v1h-1zM1055 473h1v1h-1zM1056 474h1v1h-1zM1057 475h1v1h-1zM1058 476h1v1h-1zM1059 477h1v1h-1zM1059 478h1v1h-1zM1060 479h1v1h-1zM1061 480h1v1h-1zM1062 481h1v1h-1zM1062 482h1v1h-1zM1063 483h1v1h-1zM1064 484h1v1h-1zM1065 485h1v1h-1zM1066 486h1v1h-1zM1067 487h1v1h-1zM1068 488h2v1h-2z" fill="#0000ff" shape-rendering="crispEdges"/>
<path d="M648 310h40v1h-40zM629 311h19v1h-19zM688 311h17v1h-17zM617 312h12v1h-12zM705 312h11v1h-11zM608 313h9v1h-9zM716 313h9v1h-9zM599 314h9v1h-9zM725 314h7v1h-7zM592 315h7v1h-7zM732 315h6v1h-6zM585 316h7v1h-7zM738 316h6v1h-6zM579 317h6v1h-6zM744 317h5v1h-5zM574 318h5v1h-5zM749 318h4v1h-4zM569 319h5v1h-5zM753 319h5v1h-5zM564 320h5v1h-5zM758 320h4v1h-4zM559 321h5v1h-5zM762 321h4v1h-4zM555 322h4v1h-4zM766 322h4v1h-4zM551 323h4v1h-4zM770 323h4v1h-4zM547 324h4v1h-4zM774 324h4v1h-4zM544 325h3v1h-3zM778 325h4v1h-4zM541 326h3v1h-3zM782 326h3v1h-3zM537 327h4v1h-4zM785 327h3v1h-3zM535 328h2v1h-2zM788 328h4v1h-4zM532 329h3v1h-3zM792 329h3v1h-3zM529 330h3v1h-3zM795 330h3v1h-3zM526 331h3v1h-3zM798 331h2v1h-2zM524 332h2v1h-2zM800 332h3v1h-3zM521 333h3v1h-3zM803 333h3v1h-3zM519 334h2v1h-2zM806 334h2v1h-2zM516 335h3v1h-3zM808 335h3v1h-3zM514 336h2v1h-2zM811 336h2v1h-2zM512 337h2v1h-2zM813 337h3v1h-3zM509 338h3v1h-3zM816 338h2v1h-2zM507 339h2v1h-2zM818 339h2v1h-2zM505 340h2v1h-2zM820 340h2v1h-2zM502 341h3v1h-3zM822 341h3v1h-3zM500 342h2v1h-2zM825 342h2v1h-2zM498 343h2v1h-2zM827 343h2v1h-2zM495 344h3v1h-3zM829 344h2v1h-2zM493 345h2v1h-2zM831 345h2v1h-2zM491 346h2v1h-2zM833 346h2v1h-2zM489 347h2v1h-2zM835 347h2v1h-2zM487 348h2v1h-2zM837 348h2v1h-2zM484 349h3v1h-3zM839 349h2v1h-2zM482 350h2v1h-2zM841 350h1v1h-1zM480 351h2v1h-2zM842 351h2v1h-2zM479 352h1v1h-1zM844 352h2v1h-2zM477 353h2v1h-2zM846 353h2v1h-2zM475 354h2v1h-2zM848 354h2v1h-2zM473 355h2v1h-2zM850 355h2v1h-2zM472 356h1v1h-1zM852 356h1v1h-1zM470 357h2v1h-2zM853 357h2v1h-2zM468 358h2v1h-2zM855 358h2v1h-2zM467 359h1v1h-1zM857 359h2v1h-2zM465 360h2v1h-2zM859 360h1v1h-1zM464 361h1v1h-1zM860 361h2v1h-2zM462 362h2v1h-2zM862 362h2v1h-2zM461 363h1v1h-1zM864 363h1v1h-1zM459 364h2v1h-2zM865 364h2v1h-2zM458 365h1v1h-1zM867 365h2v1h-2zM456 366h2v1h-2zM869 366h1v1h-1zM455 367h1v1h-1zM870 367h2v1h-2zM453 368h2v1h-2zM872 368h1v1h-1zM452 369h1v1h-1zM873 369h2v1h-2zM450 370h2v1h-2zM875 370h1v1h-1zM449 371h1v1h-1zM876 371h2v1h-2zM447 372h2v1h-2zM878 372h1v1h-1zM446 373h1v1h-1zM879 373h2v1h-2zM444 374h2v1h-2zM881 374h1v1h-1zM443 375h1v1h-1zM882 375h1v1h-1zM442 376h1v1h-1zM883 376h2v1h-2zM441 377h1v1h-1zM885 377h1v1h-1zM440 378h1v1h-1zM886 378h1v1h-1zM439 379h1v1h-1zM887 379h2v1h-2zM437 380h2v1h-2zM889 380h1v1h-1zM436 381h1v1h-1zM890 381h1v1h-1zM435 382h1v1h-1zM891 382h2v1h-2zM434 383h1v1h-1zM893 383h1v1h-1zM433 384h1v1h-1zM894 384h1v1h-1zM432 385h1v1h-1zM895 385h2v1h-2zM430 386h2v1h-2zM897 386h1v1h-1zM429 387h1v1h-1zM898 387h1v1h-1zM428 388h1v1h-1zM899 388h2v1h-2zM427 389h1v1h-1zM901 389h1v1h-1zM426 390h1v1h-1zM902 390h1v1h-1zM425 391h1v1h-1zM903 391h1v1h-1zM424 392h1v1h-1zM904 392h2v1h-2zM423 393h1v1h-1zM906 393h1v1h-1zM422 394h1v1h-1zM907 394h1v1h-1zM421 395h1v1h-1zM908 395h1v1h-1zM420 396h1v1h-1zM909 396h2v1h-2zM419 397h1v1h-1zM911 397h1v1h-1zM418 398h1v1h-1zM912 398h1v1h-1zM417 399h1v1h-1zM913 399h1v1h-1zM416 400h1v1h-1zM914 400h1v1h-1zM415 401h1v1h-1zM915 401h1v1h-1zM414 402h1v1h-1zM916 402h1v1h-1zM413 403h1v1h-1zM917 403h1v1h-1zM412 404h1v1h-1zM918 404h1v1h-1zM411 405h1v1h-1zM919 405h1v1h-1zM410 406h1v1h-1zM920 406h1v1h-1zM409 407h1v1h-1zM921 407h1v1h-1zM408 408h1v1h-1zM922 408h2v1h-2zM407 409h1v1h-1zM924 409h1v1h-1zM406 410h1v1h-1zM925 410h1v1h-1zM404 411h2v1h-2zM926 411h1v1h-1zM927 412h1v1h-1zM928 413h1v1h-1zM929 414h2v1h-2zM931 415h1v1h-1zM932 416h1v1h-1zM933 417h2v1h-2zM935 418h1v1h-1zM936 419h1v1h-1zM937 420h2v1h-2zM939 421h1v1h-1zM940 422h2v1h-2zM942 423h1v1h-1zM943 424h2v1h-2zM945 425h2v1h-2zM947 426h2v1h-2zM949 427h1v1h-1zM950 428h2v1h-2zM952 429h2v1h-2zM954 430h1v1h-1zM955 431h1v1h-1zM956 432h2v1h-2zM958 433h1v1h-1zM959 434h2v1h-2zM961 435h2v1h-2zM963 436h2v1h-2zM965 437h2v1h-2zM967 438h3v1h-3zM970 439h2v1h-2zM972 440h3v1h-3zM975 441h2v1h-2zM977 442h2v1h-2zM979 443h1v1h-1zM980 444h2v1h-2zM982 445h2v1h-2zM984 446h2v1h-2zM986 447h2v1h-2zM988 448h2v1h-2zM990 449h2v1h-2zM992 450h3v1h-3zM995 451h2v1h-2zM997 452h2v1h-2zM999 453h2v1h-2zM1001 454h2v1h-2zM1003 455h2v1h-2zM1005 456h1v1h-1zM1006 457h2v1h-2zM1008 458h2v1h-2zM1010 459h2v1h-2zM1012 460h1v1h-1zM1013 461h2v1h-2zM1015 462h2v1h-2zM1017 463h1v1h-1zM1018 464h2v1h-2zM1020 465h1v1h-1zM1021 466h2v1h-2zM1023 467h2v1h-2zM1025 468h2v1h-2zM1027 469h3v1h-3zM1030 470h2v1h-2zM1032 471h1v1h-1zM1033 472h2v1h-2zM1035 473h2v1h-2zM1037 474h3v1h-3zM1040 475h5v1h-5zM1045 476h2v1h-2zM1047 477h3v1h-3z" fill="#ff0000" shape-rendering="crispEdges"/>
<g fill="#0000ff" shape-rendering="crispEdges"><rect x="424" y="456" width="4" height="2"/><rect x="425" y="455" width="2" height="4"/><rect x="439" y="403" width="4" height="2"/><rect x="440" y="402" width="2" height="4"/><rect x="463" y="346" width="4" height="2"/><rect x="464" y="345" width="2" height="4"/><rect x="494" y="296" width="4" height="2"/><rect x="495" y="295" width="2" height="4"/><rect x="533" y="261" width="4" height="2"/><rect x="534" y="260" width="2" height="4"/><rect x="577" y="245" width="4" height="2"/><rect x="578" y="244" width="2" height="4"/><rect x="622" y="245" width="4" height="2"/><rect x="623" y="244" width="2" height="4"/><rect x="666" y="256" width="4" height="2"/><rect x="667" y="255" width="2" height="4"/><rect x="705" y="275" width="4" height="2"/><rect x="706" y="274" width="2" height="4"/><rect x="740" y="298" width="4" height="2"/><rect x="741" y="297" width="2" height="4"/><rect x="771" y="321" width="4" height="2"/><rect x="772" y="320" width="2" height="4"/><rect x="798" y="342" width="4" height="2"/><rect x="799" y="341" width="2" height="4"/><rect x="823" y="359" width="4" height="2"/><rect x="824" y="358" width="2" height="4"/><rect x="845" y="372" width="4" height="2"/><rect x="846" y="371" width="2" height="4"/><rect x="866" y="381" width="4" height="2"/><rect x="867" y="380" width="2" height="4"/><rect x="885" y="388" width="4" height="2"/><rect x="886" y="387" width="2" height="4"/><rect x="904" y="394" width="4" height="2"/><rect x="905" y="393" width="2" height="4"/><rect x="921" y="399" width="4" height="2"/><rect x="922" y="398" width="2" height="4"/><rect x="938" y="405" width="4" height="2"/><rect x="939" y="404" width="2" height="4"/><rect x="953" y="412" width="4" height="2"/><rect x="954" y="411" width="2" height="4"/><rect x="966" y="419" width="4" height="2"/><rect x="967" y="418" width="2" height="4"/><rect x="979" y="426" width="4" height="2"/><rect x="980" y="425" width="2" height="4"/><rect x="990" y="434" width="4" height="2"/><rect x="991" y="433" width="2" height="4"/><rect x="1000" y="441" width="4" height="2"/><rect x="1001" y="440" width="2" height="4"/><rect x="1009" y="447" width="4" height="2"/><rect x="1010" y="446" width="2" height="4"/><rect x="1017" y="451" width="4" height="2"/><rect x="1018" y="450" width="2" height="4"/><rect x="1024" y="455" width="4" height="2"/><rect x="1025" y="454" width="2" height="4"/><rect x="1030" y="458" width="4" height="2"/><rect x="1031" y="457" width="2" height="4"/><rect x="1037" y="461" width="4" height="2"/><rect x="1038" y="460" width="2" height="4"/><rect x="1042" y="464" width="4" height="2"/><rect x="1043" y="463" width="2" height="4"/><rect x="1048" y="467" width="4" height="2"/><rect x="1049" y="466" width="2" height="4"/><rect x="1052" y="471" width="4" height="2"/><rect x="1053" y="470" width="2" height="4"/><rect x="1056" y="475" width="4" height="2"/><rect x="1057" y="474" width="2" height="4"/><rect x="1059" y="479" width="4" height="2"/><rect x="1060" y="478" width="2" height="4"/><rect x="1062" y="483" width="4" height="2"/><rect x="1063" y="482" width="2" height="4"/><rect x="1064" y="485" width="4" height="2"/><rect x="1065" y="484" width="2" height="4"/><rect x="1066" y="487" width="4" height="2"/><rect x="1067" y="486" width="2" height="4"/><rect x="1068" y="488" width="4" height="2"/><rect x="1069" y="487" width="2" height="4"/></g>
<g fill="#ff0000" shape-rendering="crispEdges"><rect x="401" y="413" width="4" height="2"/><rect x="402" y="412" width="2" height="4"/><rect x="422" y="392" width="4" height="2"/><rect x="423" y="391" width="2" height="4"/><rect x="447" y="371" width="4" height="2"/><rect x="448" y="370" width="2" height="4"/><rect x="475" y="353" width="4" height="2"/><rect x="476" y="352" width="2" height="4"/><rect x="505" y="339" width="4" height="2"/><rect x="506" y="338" width="2" height="4"/><rect x="536" y="327" width="4" height="2"/><rect x="537" y="326" width="2" height="4"/><rect x="567" y="319" width="4" height="2"/><rect x="568" y="318" width="2" height="4"/><rect x="600" y="314" width="4" height="2"/><rect x="601" y="313" width="2" height="4"/><rect x="633" y="311" width="4" height="2"/><rect x="634" y="310" width="2" height="4"/><rect x="666" y="310" width="4" height="2"/><rect x="667" y="309" width="2" height="4"/><rect x="698" y="311" width="4" height="2"/><rect x="699" y="310" width="2" height="4"/><rect x="730" y="314" width="4" height="2"/><rect x="731" y="313" width="2" height="4"/><rect x="761" y="320" width="4" height="2"/><rect x="762" y="319" width="2" height="4"/><rect x="790" y="328" width="4" height="2"/><rect x="791" y="327" width="2" height="4"/><rect x="818" y="339" width="4" height="2"/><rect x="819" y="338" width="2" height="4"/><rect x="844" y="352" width="4" height="2"/><rect x="845" y="351" width="2" height="4"/><rect x="868" y="366" width="4" height="2"/><rect x="869" y="365" width="2" height="4"/><rect x="889" y="381" width="4" height="2"/><rect x="890" y="380" width="2" height="4"/><rect x="907" y="395" width="4" height="2"/><rect x="908" y="394" width="2" height="4"/><rect x="923" y="409" width="4" height="2"/><rect x="924" y="408" width="2" height="4"/><rect x="937" y="420" width="4" height="2"/><rect x="938" y="419" width="2" height="4"/><rect x="950" y="428" width="4" height="2"/><rect x="951" y="427" width="2" height="4"/><rect x="961" y="435" width="4" height="2"/><rect x="962" y="434" width="2" height="4"/><rect x="972" y="440" width="4" height="2"/><rect x="973" y="439" width="2" height="4"/><rect x="982" y="445" width="4" height="2"/><rect x="983" y="444" width="2" height="4"/><rect x="991" y="449" width="4" height="2"/><rect x="992" y="448" width="2" height="4"/><rect x="999" y="453" width="4" height="2"/><rect x="1000" y="452" width="2" height="4"/><rect x="1006" y="457" width="4" height="2"/><rect x="1007" y="456" width="2" height="4"/><rect x="1013" y="461" width="4" height="2"/><rect x="1014" y="460" width="2" height="4"/><rect x="1019" y="465" width="4" height="2"/><rect x="1020" y="464" width="2" height="4"/><rect x="1024" y="467" width="4" height="2"/><rect x="1025" y="466" width="2" height="4"/><rect x="1029" y="470" width="4" height="2"/><rect x="1030" y="469" width="2" height="4"/><rect x="1033" y="472" width="4" height="2"/><rect x="1034" y="471" width="2" height="4"/><rect x="1038" y="474" width="4" height="2"/><rect x="1039" y="473" width="2" height="4"/><rect x="1042" y="475" width="4" height="2"/><rect x="1043" y="474" width="2" height="4"/><rect x="1045" y="476" width="4" height="2"/><rect x="1046" y="475" width="2" height="4"/><rect x="1047" y="476" width="4" height="2"/><rect x="1048" y="475" width="2" height="4"/></g>
<text x="399.6" y="574" font-size="14.5" text-anchor="end" font-weight="normal">0</text><text x="399.6" y="523" font-size="14.5" text-anchor="end" font-weight="normal">1</text><text x="399.6" y="473" font-size="14.5" text-anchor="end" font-weight="normal">2</text><text x="399.6" y="422" font-size="14.5" text-anchor="end" font-weight="normal">3</text><text x="399.6" y="372" font-size="14.5" text-anchor="end" font-weight="normal">4</text><text x="399.6" y="322" font-size="14.5" text-anchor="end" font-weight="normal">5</text><text x="399.6" y="271" font-size="14.5" text-anchor="end" font-weight="normal">6</text><text x="399.6" y="221" font-size="14.5" text-anchor="end" font-weight="normal">7</text><text x="399.6" y="170" font-size="14.5" text-anchor="end" font-weight="normal">8</text><text x="399.6" y="120" font-size="14.5" text-anchor="end" font-weight="normal">9</text><text x="399.6" y="70" font-size="14.5" text-anchor="end" font-weight="normal">10</text><text x="490.5" y="585" font-size="14.5" text-anchor="middle" font-weight="normal" textLength="28" lengthAdjust="spacingAndGlyphs">3000</text><text x="587.5" y="585" font-size="14.5" text-anchor="middle" font-weight="normal" textLength="28" lengthAdjust="spacingAndGlyphs">4000</text><text x="684.5" y="585" font-size="14.5" text-anchor="middle" font-weight="normal" textLength="28" lengthAdjust="spacingAndGlyphs">5000</text><text x="781.5" y="585" font-size="14.5" text-anchor="middle" font-weight="normal" textLength="28" lengthAdjust="spacingAndGlyphs">6000</text><text x="879.5" y="585" font-size="14.5" text-anchor="middle" font-weight="normal" textLength="28" lengthAdjust="spacingAndGlyphs">7000</text><text x="976.5" y="585" font-size="14.5" text-anchor="middle" font-weight="normal" textLength="28" lengthAdjust="spacingAndGlyphs">8000</text><text x="1074.5" y="574" font-size="14" text-anchor="start" font-weight="bold" textLength="6.6" lengthAdjust="spacingAndGlyphs">0</text><text x="1074.5" y="523" font-size="14" text-anchor="start" font-weight="bold" textLength="6.6" lengthAdjust="spacingAndGlyphs">2</text><text x="1074.5" y="473" font-size="14" text-anchor="start" font-weight="bold" textLength="6.6" lengthAdjust="spacingAndGlyphs">4</text><text x="1074.5" y="422" font-size="14" text-anchor="start" font-weight="bold" textLength="6.6" lengthAdjust="spacingAndGlyphs">6</text><text x="1074.5" y="372" font-size="14" text-anchor="start" font-weight="bold" textLength="6.6" lengthAdjust="spacingAndGlyphs">8</text><text x="1074.5" y="322" font-size="14" text-anchor="start" font-weight="bold" textLength="13.2" lengthAdjust="spacingAndGlyphs">10</text><text x="1074.5" y="271" font-size="14" text-anchor="start" font-weight="bold" textLength="13.2" lengthAdjust="spacingAndGlyphs">12</text><text x="1074.5" y="221" font-size="14" text-anchor="start" font-weight="bold" textLength="13.2" lengthAdjust="spacingAndGlyphs">14</text><text x="676" y="602" font-size="13.5" text-anchor="start" font-weight="normal" textLength="72.5" lengthAdjust="spacingAndGlyphs">RPM [1/min]</text><text transform="translate(375,356) rotate(-90)" font-size="14.5" textLength="76.5" lengthAdjust="spacingAndGlyphs">Leistung[PS]</text><text transform="translate(1087,362) rotate(90)" font-size="14" font-weight="bold" textLength="70" lengthAdjust="spacingAndGlyphs">Drehm[Nm]</text><text x="495.5" y="546.5" font-size="9.5" text-anchor="start" font-weight="normal" textLength="57" lengthAdjust="spacingAndGlyphs">NOT FOR SALE</text>
<g shape-rendering="crispEdges"><rect x="403" y="611" width="149" height="15" fill="#ffffff"/><rect x="404" y="612" width="148" height="14" fill="#716f64"/><rect x="404" y="612" width="147" height="14" fill="#aca899"/><rect x="404" y="612" width="146" height="14" fill="#ece9d8"/><rect x="404" y="625" width="146" height="1" fill="#f6f3e4"/></g><text x="465.3" y="625" font-size="12.5" text-anchor="start" font-weight="normal" textLength="25.5" lengthAdjust="spacingAndGlyphs">Mittel</text>
<g shape-rendering="crispEdges"><rect x="748" y="611" width="150" height="15" fill="#ffffff"/><rect x="749" y="612" width="149" height="14" fill="#716f64"/><rect x="749" y="612" width="148" height="14" fill="#aca899"/><rect x="749" y="612" width="147" height="14" fill="#ece9d8"/><rect x="749" y="625" width="147" height="1" fill="#f6f3e4"/></g><text x="792.5" y="625" font-size="12.5" text-anchor="start" font-weight="normal" textLength="61" lengthAdjust="spacingAndGlyphs">ASCII Export</text>
<g shape-rendering="crispEdges"><rect x="921" y="611" width="149" height="15" fill="#ffffff"/><rect x="922" y="612" width="148" height="14" fill="#716f64"/><rect x="922" y="612" width="147" height="14" fill="#aca899"/><rect x="922" y="612" width="146" height="14" fill="#ece9d8"/><rect x="922" y="625" width="146" height="1" fill="#f6f3e4"/></g><text x="967.5" y="625" font-size="12.5" text-anchor="start" font-weight="normal" textLength="55.5" lengthAdjust="spacingAndGlyphs">Screenshot</text>
<g shape-rendering="crispEdges"><rect x="0" y="626" width="1151" height="1" fill="#3c69c8"/><rect x="0" y="627" width="1151" height="1" fill="#3b8aee"/><rect x="0" y="628" width="1151" height="1" fill="#3b8cee"/><rect x="0" y="629" width="1151" height="1" fill="#3275e0"/><rect x="0" y="630" width="1151" height="1" fill="#2c5ecc"/><rect x="0" y="631" width="1151" height="1" fill="#4a90e8"/><rect x="0" y="632" width="1151" height="1" fill="#4488e4"/><rect x="0" y="633" width="1151" height="1" fill="#3272dc"/><rect x="0" y="634" width="1151" height="13" fill="#2256d6"/><rect x="0" y="636" width="1" height="11" fill="#1f6e22"/><rect x="11" y="637" width="2" height="2" fill="#3cb4f8"/><rect x="10" y="636" width="2" height="2" fill="#0a2a96"/><rect x="14" y="640" width="2" height="2" fill="#3cb4f8"/><rect x="13" y="639" width="2" height="2" fill="#0a2a96"/><rect x="11" y="643" width="2" height="2" fill="#3cb4f8"/><rect x="10" y="642" width="2" height="2" fill="#0a2a96"/><rect x="14" y="646" width="2" height="2" fill="#3cb4f8"/><rect x="13" y="645" width="2" height="2" fill="#0a2a96"/><rect x="21" y="634" width="158" height="13" fill="#3c81f3"/><rect x="22" y="634" width="156" height="1" fill="#5d9cf7"/><rect x="181" y="634" width="159" height="13" fill="#3c81f3"/><rect x="182" y="634" width="157" height="1" fill="#5d9cf7"/><rect x="341" y="634" width="159" height="13" fill="#1e4dbe"/><rect x="342" y="634" width="157" height="1" fill="#17399a"/></g><path d="M30,647 L30,645 L35,637 L46,637 L46,647 Z" fill="#0c0c0c"/><path d="M31,644 L35,638" stroke="#6a5a3a" stroke-width="1.5"/><rect x="39" y="638" width="3" height="2" fill="#2a6af0"/><rect x="42" y="641" width="2" height="2" fill="#e8e8ff"/><rect x="44" y="641" width="1" height="2" fill="#3030c0"/><rect x="31" y="646" width="10" height="1" fill="#c8a0a0"/><rect x="36" y="646" width="2" height="1" fill="#c03020"/><g shape-rendering="crispEdges"><rect x="190" y="637" width="16" height="10" fill="#000"/></g><path d="M200.5,638 L204.5,647 L196.5,647 Z" fill="#c80000"/><path d="M200.5,640 L202.5,647 L198.5,647 Z" fill="#ff7a00"/><path d="M200.8,642 L201.8,647 L199.8,647 Z" fill="#ffee00"/><path d="M199.5,639 L191.5,645" stroke="#1a9090" stroke-width="1.2"/><rect x="191" y="644" width="4" height="3" fill="#8a9090"/><g shape-rendering="crispEdges"><rect x="351" y="637" width="16" height="10" fill="#000"/></g><path d="M361.5,638 L365.5,647 L357.5,647 Z" fill="#c80000"/><path d="M361.5,640 L363.5,647 L359.5,647 Z" fill="#ff7a00"/><path d="M361.8,642 L362.8,647 L360.8,647 Z" fill="#ffee00"/><path d="M360.5,639 L352.5,645" stroke="#1a9090" stroke-width="1.2"/><rect x="352" y="644" width="4" height="3" fill="#8a9090"/><g shape-rendering="crispEdges"><rect x="1061" y="630" width="90" height="17" fill="#0f9ae9"/><rect x="1061" y="630" width="90" height="1" fill="#0d52c8"/><rect x="1061" y="631" width="1" height="16" fill="#0b3a7a"/><rect x="1062" y="631" width="2" height="16" fill="#1ad0f8"/></g><circle cx="1079.5" cy="637.5" r="3" fill="#8ad47a"/><path d="M1073,647 Q1073,641 1079.5,641 Q1086,641 1086,647 Z" fill="#6cc45a"/><rect x="1090" y="636" width="8" height="6" fill="#34346a"/><rect x="1090" y="636" width="1" height="6" fill="#9a9ab0"/><rect x="1091" y="642" width="6" height="5" fill="#d0d0e8"/><g></g>
<g fill="#ffffff"><text x="50" y="650" font-size="13.5" text-anchor="start" font-weight="normal" textLength="46.5" lengthAdjust="spacingAndGlyphs">GSE Dyno</text><text x="210" y="650" font-size="13.5" text-anchor="start" font-weight="normal" textLength="88" lengthAdjust="spacingAndGlyphs">GSE Dyno V0.1.19</text><text x="370" y="650" font-size="13.5" text-anchor="start" font-weight="normal" textLength="102" lengthAdjust="spacingAndGlyphs">Diagramme: RPM [1/</text><text x="1126" y="645.5" font-size="13" text-anchor="start" font-weight="normal" textLength="31" lengthAdjust="spacingAndGlyphs">20:21</text></g>
<path d="M1099.5,636 q2.5,3 0,6 M1102.5,635 q3.5,4 0,8" stroke="#c8b8a0" stroke-width="1.2" fill="none"/>
</svg>
</body></html>
